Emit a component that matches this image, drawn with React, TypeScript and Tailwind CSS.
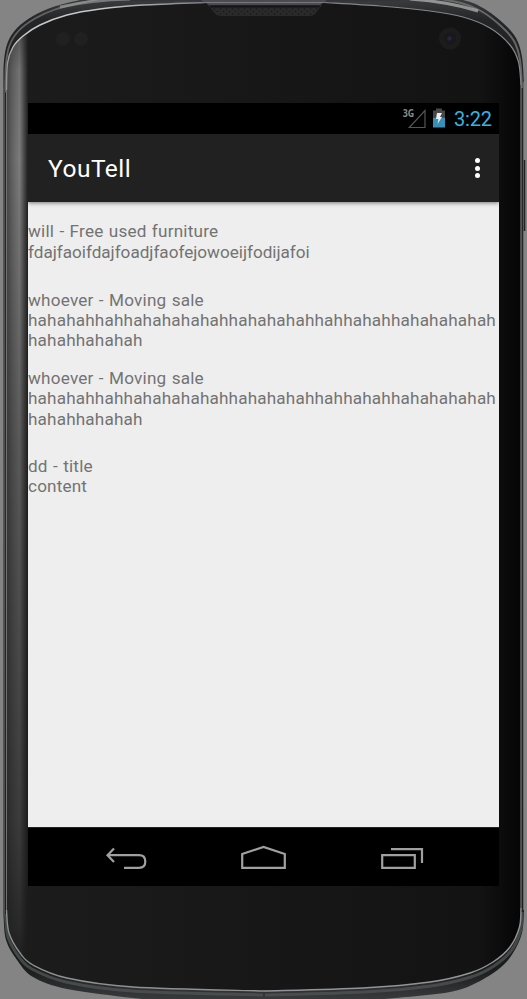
import React from "react";

type Pt = [number, number];

/** Smooth open curve through a list of points. */
function curve(pts: Pt[]): string {
  let d = `M${pts[0][0]} ${pts[0][1]}`;
  for (let i = 0; i < pts.length - 1; i++) {
    const a = pts[Math.max(0, i - 1)];
    const b = pts[i];
    const c = pts[i + 1];
    const e = pts[Math.min(pts.length - 1, i + 2)];
    d += `C${b[0] + (c[0] - a[0]) / 6} ${b[1] + (c[1] - a[1]) / 6} ${c[0] - (e[0] - b[0]) / 6} ${c[1] - (e[1] - b[1]) / 6} ${c[0]} ${c[1]}`;
  }
  return d;
}
const after = (pts: Pt[]) => curve(pts).replace("M", "L");

const outTop: Pt[] = [[3.5, 90], [3.8, 63], [7.5, 43], [17, 28], [33, 16], [53, 7], [80, 0], [120, -8]];
const outTopR: Pt[] = [[420, -8], [463, 0], [483, 8], [503, 23], [516, 38], [522, 57], [524, 85]];
const outBotR: Pt[] = [[524, 910], [522, 933], [513, 953], [500, 968], [476, 983], [450, 992], [396, 998], [340, 1002]];
const outBotL: Pt[] = [[180, 1002], [133, 998], [67, 989], [33, 977], [17, 960], [6, 940], [3.5, 915]];
const inTop: Pt[] = [[6.5, 90], [7.5, 63], [13, 47], [23, 36], [40, 25], [67, 15], [100, 9], [143, 5], [205, 2.5]];
const inTopR: Pt[] = [[324, 2.5], [380, 6], [430, 11], [463, 17], [490, 28], [510, 45], [518.5, 62], [521, 85]];
const inBotR: Pt[] = [[521, 908], [519.5, 927], [510, 947], [493, 962], [470, 973], [430, 982], [363, 988], [264, 991]];
const inBotL: Pt[] = [[264, 991], [133, 987], [67, 978], [33, 965], [20, 953], [9, 933], [6.5, 910]];

const OUTER = curve(outTop) + after(outTopR) + after(outBotR) + after(outBotL) + "Z";
const INNER = curve(inTop) + after(inTopR) + after(inBotR) + after(inBotL) + "Z";

const shift = (pts: Pt[], dx: number, dy: number): Pt[] => pts.map(([x, y]) => [x + dx, y + dy]);

function PhoneShell() {
  return (
    <svg className="absolute inset-0" width="527" height="999" viewBox="0 0 527 999" aria-hidden="true">
      <defs>
        <linearGradient id="rim" x1="0" y1="0" x2="0" y2="999" gradientUnits="userSpaceOnUse">
          <stop offset="0" stopColor="#3a3b3d" />
          <stop offset=".02" stopColor="#242526" />
          <stop offset=".06" stopColor="#222" />
          <stop offset=".5" stopColor="#2a2a2a" />
          <stop offset=".97" stopColor="#1b1c1c" />
          <stop offset="1" stopColor="#383a3b" />
        </linearGradient>
        <linearGradient id="face" x1="0" y1="0" x2="1" y2="0">
          <stop offset="0" stopColor="#1c1c1c" />
          <stop offset=".5" stopColor="#171717" />
          <stop offset=".92" stopColor="#131313" />
          <stop offset="1" stopColor="#050505" />
        </linearGradient>
        <linearGradient id="side" x1="0" y1="0" x2="1" y2="0">
          <stop offset="0" stopColor="#484848" />
          <stop offset=".25" stopColor="#626262" />
          <stop offset=".6" stopColor="#7c7c7c" />
          <stop offset=".8" stopColor="#4c4c4c" />
          <stop offset="1" stopColor="#1e1e1e" />
        </linearGradient>
        <linearGradient id="fade" x1="0" y1="0" x2="0" y2="999" gradientUnits="userSpaceOnUse">
          <stop offset="0" stopColor="#1a1a1a" stopOpacity=".7" />
          <stop offset=".07" stopColor="#1a1a1a" stopOpacity=".1" />
          <stop offset=".16" stopColor="#1a1a1a" stopOpacity="0" />
          <stop offset=".45" stopColor="#1a1a1a" stopOpacity=".35" />
          <stop offset=".82" stopColor="#1a1a1a" stopOpacity=".65" />
          <stop offset=".93" stopColor="#1a1a1a" stopOpacity=".85" />
          <stop offset=".97" stopColor="#1a1a1a" stopOpacity="1" />
        </linearGradient>
        <linearGradient id="glint" x1="0" y1="0" x2="210" y2="0" gradientUnits="userSpaceOnUse">
          <stop offset="0" stopColor="#777" />
          <stop offset=".08" stopColor="#c8c8c8" />
          <stop offset=".5" stopColor="#c4c6ca" />
          <stop offset="1" stopColor="#77787e" />
        </linearGradient>
        <pattern id="mesh" width="6" height="5" patternUnits="userSpaceOnUse">
          <rect width="6" height="5" fill="#2a2a2a" />
          <circle cx="1.5" cy="1.5" r=".8" fill="#151515" />
          <circle cx="4.5" cy="4" r=".8" fill="#151515" />
        </pattern>
        <clipPath id="front"><path d={INNER} /></clipPath>
        <clipPath id="body"><path d={OUTER} /></clipPath>
      </defs>
      <path d={OUTER} fill="url(#rim)" />
      <g clipPath="url(#body)" fill="none">
        <path d={curve(shift(outTop, 2, 2.5))} stroke="#777" strokeWidth="1.8" opacity=".75" />
        <path d="M60 7Q90 0 130 -1" stroke="#a5a5a5" strokeWidth="3" opacity=".6" />
        <path d={curve(shift(outTopR, -2, 3))} stroke="#777" strokeWidth="2" opacity=".8" />
        <path d="M410 -1Q450 2 478 11" stroke="#c5c5c5" strokeWidth="3" opacity=".65" />
        <path d={curve(shift(inBotR, 1, 4))} stroke="#525556" strokeWidth="3" opacity=".75" />
        <path d={curve(shift(inBotL, -1, 4))} stroke="#525556" strokeWidth="3" opacity=".75" />
      </g>
      <path d={INNER} fill="url(#face)" />
      <g clipPath="url(#front)">
        <rect x="7" y="0" width="21" height="999" fill="url(#side)" />
        <rect x="7" y="0" width="21" height="999" fill="url(#fade)" />
      </g>
      <g fill="none">
        <path d="M4.5 80V915" stroke="#4c4c4c" />
        <path d="M6.5 85V915" stroke="#727272" />
        <path d={curve(inTop)} stroke="url(#glint)" strokeWidth="1.4" />
        <path d={curve(inTopR)} stroke="#85868a" strokeWidth="1.2" />
        <path d={curve(inBotR)} stroke="#929597" strokeWidth="1.4" />
        <path d={curve(inBotL)} stroke="#8e9192" strokeWidth="1.4" />
        <path d="M521 82V910" stroke="#777" strokeWidth="1.2" />
        <path d="M523.5 82V910" stroke="#686868" />
        <path d="M524.5 160V231" stroke="#222" strokeWidth="1.5" />
      </g>
      <path d="M205 2H324L315 14Q313 16 309 16H221Q216 16 213 11Z" fill="url(#mesh)" />
      <path d="M130 0H400V1.2H130Z" fill="#333438" />
      <path d="M201 0H327L320 5H209Z" fill="#4b4b50" />
      <path d="M201 2.5H326" stroke="#77777f" />
      <path d="M210 6.5H319" stroke="#151515" strokeWidth="2" />
      <circle cx="63" cy="39" r="7" fill="#202020" />
      <circle cx="81" cy="39" r="7" fill="#202020" />
      <circle cx="450" cy="38.5" r="11" fill="#1c1c1d" />
      <circle cx="450" cy="38.5" r="6" fill="#19191c" />
      <circle cx="449.5" cy="38.5" r="2.2" fill="#242444" />
    </svg>
  );
}

function StatusBar() {
  return (
    <div className="flex h-[31px] shrink-0 items-center bg-black pl-[374px]">
      <svg width="50" height="31" viewBox="402 103 50 31" aria-hidden="true">
        <text x="402.7" y="117" fill="#8a8a8a" fontFamily="Open Sans, sans-serif" fontSize="10" fontWeight="700" textLength="11.5" lengthAdjust="spacingAndGlyphs">3G</text>
        <path d="M409.3 127.5H425V110.5Z" fill="none" stroke="#555" strokeWidth="1.2" />
        <path d="M433 110.5H436V108.5H442V110.5H445V117.5H433Z" fill="#484848" />
        <path d="M433 117.5H445V127.5H433Z" fill="#3790b8" />
        <path d="M437 113H442L440 117H442L437.5 124L438.5 119H436Z" fill="#eee" />
      </svg>
      <span className="mt-[2px] ml-[2px] text-[20px] leading-[31px] tracking-[-0.2px] text-[#33b5e5]">3:22</span>
    </div>
  );
}

type Post = { heading: string; lines: string[]; spacing: string; tracking: string };
const long = [
  "hahahah" + "hah" + "hahahahahah" + "hahahahah" + "hah" + "hahah" + "hahahahahah",
  "hahah" + "hahahah",
];
const posts: Post[] = [
  { heading: "will - Free used furniture", lines: ["fdajfaoifdajfoadjfaofejowoeijfodijafoi"], spacing: "pt-[18.4px]", tracking: "tracking-[-0.02px]" },
  { heading: "whoever - Moving sale", lines: long, spacing: "pt-[28px]", tracking: "tracking-[0.16px]" },
  { heading: "whoever - Moving sale", lines: long, spacing: "pt-[17.8px]", tracking: "tracking-[0.16px]" },
  { heading: "dd - title", lines: ["content"], spacing: "pt-[27.4px]", tracking: "tracking-[0.16px]" },
];

function NavBar() {
  return (
    <nav className="h-[59px] shrink-0 border-t border-[#222] bg-black">
      <svg width="471" height="58" viewBox="28 828 471 58" fill="none" stroke="#a0a0a0" strokeWidth="2.2" aria-hidden="true">
        <path d="M114 848.5L107.5 855.2L114 862M108 855.2H139Q145.3 855.2 145.3 861.5T139 867.8H124" />
        <path d="M242.2 867.8V854L263.5 847L284.8 854V867.8Z" />
        <path d="M382.2 855.2H414.8V867.8H382.2ZM391 849.2H422V863" />
      </svg>
    </nav>
  );
}

export default function App() {
  return (
    <div className="relative h-[999px] w-[527px] overflow-hidden bg-[#848484] font-['Roboto',sans-serif]">
      <PhoneShell />
      <div className="relative pt-[103px] pl-[28px]">
        <main className="flex h-[783px] w-[471px] flex-col overflow-hidden bg-[#eee]">
          <StatusBar />
          <header className="flex h-[68px] shrink-0 items-center justify-between bg-[#212121] pr-[19.5px] pl-[20px] text-white shadow-[0_1px_4px_rgba(0,0,0,0.5)]">
            <h1 className="pt-[2px] text-[24.5px] leading-[68px] tracking-[0.5px]">YouTell</h1>
            <div className="flex flex-col gap-[2.4px]">
              <i className="size-[5px] rounded-full bg-white" />
              <i className="size-[5px] rounded-full bg-white" />
              <i className="size-[5px] rounded-full bg-white" />
            </div>
          </header>
          <section className="flex-1 pt-[1px] text-[17.15px] leading-[20.2px] whitespace-nowrap text-[#737373]">
            {posts.map((p, i) => (
              <article key={i} className={p.spacing}>
                <h2 className="tracking-[0.2px] [word-spacing:0.8px]">{p.heading}</h2>
                {p.lines.map((line) => <p key={line} className={p.tracking}>{line}</p>)}
              </article>
            ))}
          </section>
          <NavBar />
        </main>
      </div>
    </div>
  );
}
